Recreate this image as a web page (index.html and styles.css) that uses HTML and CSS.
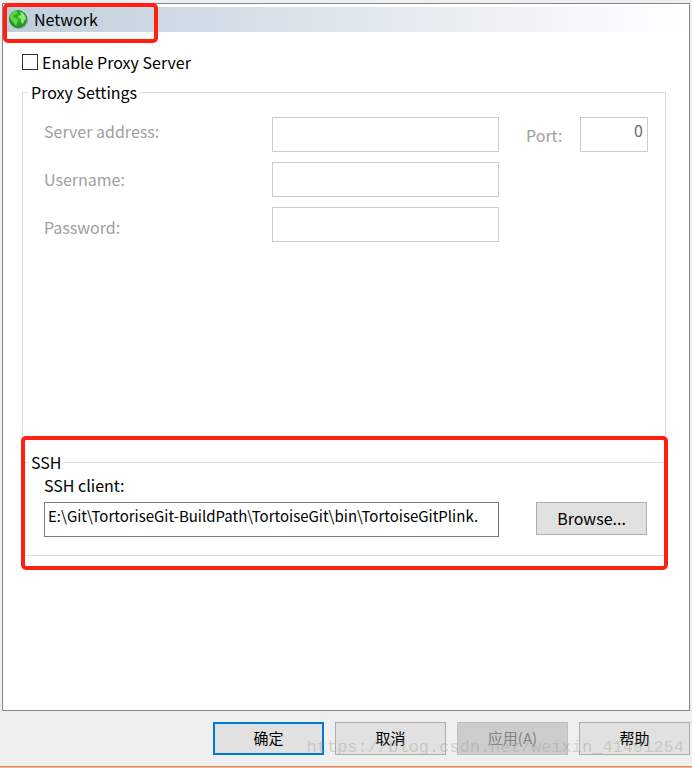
FILE: index.html
```html
<!DOCTYPE html>
<html lang="zh-CN">
<head>
<meta charset="utf-8">
<title>Network</title>
<link rel="stylesheet" href="styles.css">
</head>
<body>
<form class="dialog">
  <main class="panel">
    <header class="title-bar">
      <svg class="globe" viewBox="0 0 20 20" aria-hidden="true">
        <defs>
          <radialGradient id="ball" cx="50%" cy="45%" r="60%">
            <stop offset="0" stop-color="#35b52a"/>
            <stop offset="0.7" stop-color="#1f9f20"/>
            <stop offset="1" stop-color="#137518"/>
          </radialGradient>
        </defs>
        <circle cx="11" cy="11" r="9" fill="#64756c" opacity="0.5"/>
        <circle cx="10" cy="10" r="9" fill="url(#ball)"/>
        <path d="M2 8Q3 4 7 2L10 3L9 5L6 6L5 8L8 9L10 11L9 14L8 17L6 14L3 11Z" fill="#62d848"/>
        <path d="M12 3L15 4Q18 7 18 10L16 12L15 15L13 13L13 10L11 9L10 7L13 6Z" fill="#8ee974"/>
      </svg>
      <h1 class="title">Network</h1>
      <span class="mark mark-title"></span>
    </header>

    <div class="content">
      <label class="check"><input type="checkbox" class="check-box">Enable Proxy Server</label>

      <fieldset class="group group-proxy">
        <legend>Proxy Settings</legend>
        <div class="proxy">
          <div class="proxy-labels">
            <label for="server">Server address:</label>
            <label for="user">Username:</label>
            <label for="pass">Password:</label>
          </div>
          <div class="proxy-fields">
            <input id="server" class="field" type="text" disabled>
            <input id="user" class="field" type="text" disabled>
            <input id="pass" class="field" type="password" disabled>
          </div>
          <div class="port">
            <label for="port">Port:</label>
            <input id="port" class="field field-port" type="text" value="0" disabled>
          </div>
        </div>
      </fieldset>

      <div class="ssh">
        <fieldset class="group group-ssh">
          <legend>SSH</legend>
          <label for="client">SSH client:</label>
          <div class="ssh-row">
            <input id="client" class="field" type="text" value="E:\Git\TortoriseGit-BuildPath\TortoiseGit\bin\TortoiseGitPlink.">
            <button type="button" class="button">Browse...</button>
          </div>
        </fieldset>
        <span class="mark mark-ssh"></span>
      </div>
    </div>
  </main>

  <footer class="actions">
    <button type="button" class="button button-default">确定</button>
    <button type="button" class="button">取消</button>
    <button type="button" class="button" disabled>应用(A)</button>
    <button type="button" class="button">帮助</button>
    <span class="watermark">https://blog.csdn.net/weixin_41491254</span>
  </footer>
</form>
</body>
</html>
```
FILE: styles.css
```css
* {
  box-sizing: border-box;
}

body {
  margin: 0;
  background: #efefef;
  color: #000;
  font: 16px/20px "Noto Sans CJK SC", sans-serif;
}

.dialog {
  display: flex;
  flex-direction: column;
  min-height: 100vh;
  padding: 3px 2px 0;
  border-bottom: 1px solid #c9c4c0;
}

.panel {
  flex: 1;
  padding-top: 3px;
  border: 1px solid #828790;
  background: #fff;
}

.title-bar {
  position: relative;
  display: flex;
  align-items: center;
  gap: 6px;
  height: 25px;
  padding: 0 0 2px 5px;
  background: linear-gradient(to right, #bfcddb, #fff);
}

.globe {
  width: 20px;
  height: 20px;
}

.title {
  margin: 0;
  font-size: 16px;
  font-weight: 400;
}

/* Red annotation frames laid over the dialog */
.mark {
  position: absolute;
  border: 4px solid #ff2010;
  border-radius: 5px;
  pointer-events: none;
}

.mark-title {
  top: -4px;
  left: 0;
  width: 155px;
  height: 40px;
}

.mark-ssh {
  inset: -16px -2px -14px -1px;
}

.content {
  padding: 20px 23px 0 19px;
}

.check {
  display: flex;
  align-items: center;
  gap: 4px;
}

.check-box {
  appearance: none;
  width: 16px;
  height: 16px;
  margin: 0;
  border: 1px solid #333;
  background: #fff;
}

.check-box:checked {
  background: #333;
}

.group {
  min-width: 0;
  margin: 0;
  border: 1px solid #dcdcdc;
}

.group legend {
  padding: 0 3px;
}

.group-proxy {
  min-height: 357px;
  margin-top: 10px;
  padding: 15px 17px 0 5px;
}

.proxy {
  display: flex;
  margin-left: 16px;
  color: #a0a0a0;
}

.proxy-labels {
  display: flex;
  flex-direction: column;
  gap: 28px;
  width: 228px;
  padding-top: 4px;
}

.proxy-fields {
  display: flex;
  flex: 1;
  flex-direction: column;
  gap: 10px;
  min-width: 0;
}

.port {
  display: flex;
  align-items: center;
  justify-content: space-between;
  width: 122px;
  height: 35px;
  margin-left: 27px;
}

.field {
  width: 100%;
  min-width: 0;
  height: 35px;
  padding: 0 1px 9px 3px;
  border: 1px solid #7a7a7a;
  border-radius: 0;
  background: #fff;
  color: #000;
  font: inherit;
}

.field:disabled {
  border-color: #ccc;
  color: #6d6d6d;
}

.field-port {
  width: 68px;
  padding-right: 4px;
  text-align: right;
}

.ssh {
  position: relative;
  margin-top: 13px;
}

.group-ssh {
  padding: 3px 18px 18px 5px;
}

.group-ssh > label {
  margin-left: 16px;
}

.ssh-row {
  display: flex;
  gap: 37px;
  margin: 7px 0 0 16px;
}

.ssh-row .field {
  flex: 1;
  font-size: 15px;
}

.button {
  width: 111px;
  height: 33px;
  padding: 0 0 2px;
  border: 1px solid #adadad;
  border-radius: 0;
  background: #e1e1e1;
  color: #000;
  font: inherit;
}

.actions .button {
  font-size: 15px;
}

.button-default {
  border: 2px solid #0078d7;
}

.button:disabled {
  border-color: #bfbfbf;
  background: #ccc;
  color: #838383;
}

.actions {
  position: relative;
  display: flex;
  justify-content: flex-end;
  gap: 11px;
  margin: 0 -2px;
  padding: 11px 2px;
  border-bottom: 1px solid #ff7e33;
}

.watermark {
  position: absolute;
  right: 8px;
  bottom: 8px;
  color: rgba(150, 150, 140, 0.35);
  font: 17px/20px "Liberation Mono", monospace;
  pointer-events: none;
}
```
